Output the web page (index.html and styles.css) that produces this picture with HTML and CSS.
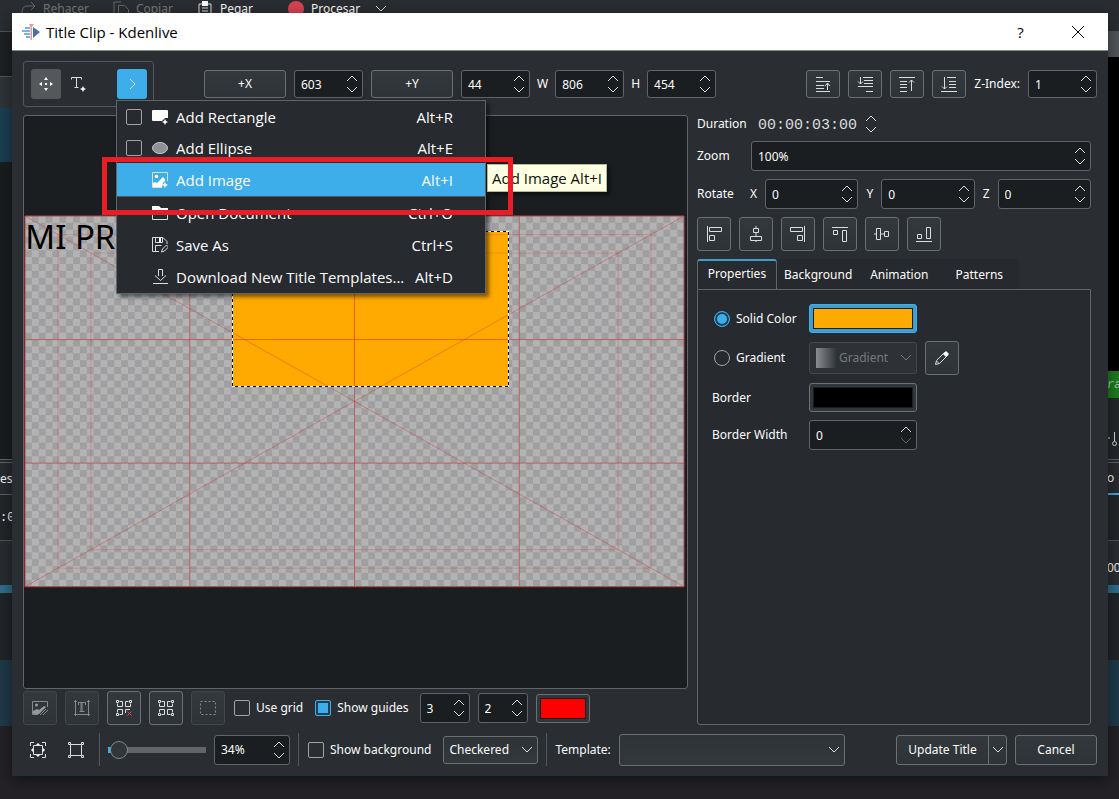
FILE: index.html
```html
<!DOCTYPE html>
<html lang="en">
  <head>
    <meta charset="utf-8" />
    <title>Title Clip - Kdenlive</title>
    <link rel="stylesheet" href="styles.css" />
  </head>
  <body>
    <!-- icon set -->
    <svg class="sprite" aria-hidden="true">
      <symbol id="chevron" viewBox="0 0 12 8"><path d="M1 1l5 5 5-5" /></symbol>
      <symbol id="spin" viewBox="0 0 12 18">
        <path d="M1 6l5-5 5 5" />
        <path class="down" d="M1 12l5 5 5-5" />
      </symbol>
      <symbol id="move" viewBox="0 0 16 16">
        <path class="fill" d="M8 1l2 3H6zM8 15l2-3H6zM1 8l3-2v4zM15 8l-3-2v4zM7 7h2v2H7z" />
      </symbol>
      <symbol id="text-add" viewBox="0 0 16 16">
        <path d="M1.500 3.500v-2h10v2M6.500 1.500v10M4.500 11.500h4" />
        <path class="fill" d="M13 10l1 2 2 1-2 1-1 2-1-2-2-1 2-1z" />
      </symbol>
      <symbol id="raise" viewBox="0 0 16 16">
        <path d="M1 1.500h7M1 5.500h14M1 9.500h8M1 12.500h8M1 15.500h14M12.500 14V7M10 10l2.500-3 2.500 3" />
      </symbol>
      <symbol id="lower" viewBox="0 0 16 16">
        <path d="M6 1.500h10M7 4.500h9M7 7.500h9M1 10.500h15M9 15.500h7M3.500 1v7M1 5.500L3.500 8 6 5.500" />
      </symbol>
      <symbol id="to-top" viewBox="0 0 16 16">
        <path d="M0 1.500h16M1 5.500h7M1 8.500h7M1 11.500h7M1 15.500h7M12.500 15V4M10 6.500L12.500 4 15 6.500" />
      </symbol>
      <symbol id="to-bottom" viewBox="0 0 16 16">
        <path d="M6 1.500h9M8 5.500h7M8 8.500h7M8 11.500h7M0 15.500h16M3.500 1v12M1 10.500L3.500 13 6 10.500" />
      </symbol>
      <symbol id="al-left" viewBox="0 0 16 16"><path d="M1.500 0v16M3.500 1.500h12v4h-12zM3.500 9.500h5v5h-5z" /></symbol>
      <symbol id="al-hcenter" viewBox="0 0 16 16"><path d="M5.500 2.500h5v4h-5zM2.500 10.500h11v4h-11zM8 0v2M8 7v3M8 15v1" /></symbol>
      <symbol id="al-right" viewBox="0 0 16 16"><path d="M14.500 0v16M.5 1.500h12v4H.5zM7.500 9.500h5v5h-5z" /></symbol>
      <symbol id="al-top" viewBox="0 0 16 16"><path d="M0 1.500h16M1.500 4.500h4v4h-4zM10.500 4.500h4v11h-4z" /></symbol>
      <symbol id="al-vcenter" viewBox="0 0 16 16"><path d="M2.500 2.500h4v11h-4zM10.500 5.500h4v5h-4zM0 8h2M7 8h3" /></symbol>
      <symbol id="al-bottom" viewBox="0 0 16 16"><path d="M0 15.500h16M1.500 8.500h4v4h-4zM10.500 1.500h4v11h-4z" /></symbol>
      <symbol id="pencil" viewBox="0 0 16 16">
        <path d="M1.500 14.500l1-4 8-8 3 3-8 8zM2.500 11l2.500 2.500" />
        <path class="fill" d="M9 4l3-3 3 3-3 3z" />
      </symbol>
      <symbol id="rect-add" viewBox="0 0 16 16">
        <path class="fill" d="M1 1h14q1 0 1 1v7h-3l-3 3H1q-1 0-1-1V2q0-1 1-1zM13 10l1 2 2 1-2 1-1 2-1-2-2-1 2-1z" />
      </symbol>
      <symbol id="ellipse" viewBox="0 0 16 16"><ellipse class="grey" cx="8" cy="8" rx="7.500" ry="5.500" /></symbol>
      <symbol id="image-add" viewBox="0 0 16 16">
        <path d="M15.500 9V.5H.5v15H10" />
        <circle class="fill" cx="4.500" cy="4.500" r="1.800" />
        <path class="fill" d="M1 15v-4l2-1 2 1 6-6 2 2v2l-2 2-1 4zM13 10l1 2 2 1-2 1-1 2-1-2-2-1 2-1z" />
      </symbol>
      <symbol id="folder" viewBox="0 0 16 16">
        <path d="M.5 1.500v13h15v-11h-7l-2-2z" />
        <path class="fill" d="M0 1h7l2 2h7v3H8L6 8H0z" />
      </symbol>
      <symbol id="save" viewBox="0 0 16 16">
        <path d="M7 14.500H.5V.5H11l4 4V7M3.500.5v5h7v-5M3.500 14V8.500h6M9.500 15l1-3 4-4 2 2-4 4z" />
        <path class="fill" d="M7 1h2v4H7z" />
      </symbol>
      <symbol id="download" viewBox="0 0 16 16"><path d="M6.500 7V.5h4V7M3 6.500l5.500 5 5.500-5M1 14.500h15" /></symbol>
      <symbol id="image-edit" viewBox="0 0 16 16">
        <path d="M15.500 7V1.500H.5v13H6" />
        <circle class="fill" cx="4.500" cy="5" r="1.500" />
        <path class="fill" d="M1 14v-3l4-2 2 1 5-4 2 1-7 7z" />
        <path d="M8 15l6-6M11 15l5-5" />
      </symbol>
      <symbol id="text-frame" viewBox="0 0 16 16"><path d="M1.500 0v16M14.500 0v16M0 14.500h16M0 1.500h3M13 1.500h3M4.500 5V2.500h7V5M8 2.500v9M7 2.500v9M5.500 11.500h5" /></symbol>
      <symbol id="nodes" viewBox="0 0 16 16">
        <path d="M3.500 1.500h3v5h-5v-3M12.500 1.500h-3v5h5v-3M3.500 14.500h3v-5h-5v3M12.500 14.500h-3v-5h5v3" />
        <path d="M.5.500h2v2h-2zM13.500.5h2v2h-2zM.5 13.500h2v2h-2zM13.500 13.500h2v2h-2z" />
      </symbol>
      <symbol id="nodes-off" viewBox="0 0 16 16">
        <path d="M3.500 1.500h3v5h-5v-3M12.500 1.500h-3v5h5v-3M3.500 14.500h3v-5h-5v3M9.500 13V9.500H14" />
        <path d="M.5.500h2v2h-2zM13.500.5h2v2h-2zM.5 13.500h2v2h-2z" />
        <path class="cross" d="M11.500 11.500l4 4M15.500 11.500l-4 4" />
      </symbol>
      <symbol id="dashed" viewBox="0 0 16 16"><path stroke-dasharray="2 2" d="M.5 1.500h15v13H.5z" /></symbol>
      <symbol id="fit" viewBox="0 0 16 16">
        <path d="M3.500 3.500h9v9h-9zM.5 4V.5H4M12 .5h3.500V4M15.500 12v3.500H12M4 15.500H.5V12" />
        <path class="fill" d="M6 3l2-2 2 2zM6 13l2 2 2-2zM3 6L1 8l2 2zM13 6l2 2-2 2z" />
      </symbol>
      <symbol id="unfit" viewBox="0 0 16 16">
        <path d="M2.500 2.500h11v11h-11z" />
        <path d="M.5.500h2v2h-2zM13.500.5h2v2h-2zM.5 13.500h2v2h-2zM13.500 13.500h2v2h-2z" />
      </symbol>
    </svg>

    <!-- main window behind the dialog -->
    <div class="desk" aria-hidden="true">
      <div class="desk-bar">
        <span class="off"><svg viewBox="0 0 16 16"><path d="M15 5H7Q2 5 2 12M11 1l4 4-4 4" /></svg>Rehacer</span>
        <span class="off"><svg viewBox="0 0 16 16"><path d="M4 13H1V1h7M5.500 4.500h6l4 4v7h-10z" /></svg>Copiar</span>
        <span><svg viewBox="0 0 16 16"><path d="M2 3h12v13H2zM5 7h6M5 10h6" /><path class="fill" d="M5 0h6v5H5z" /></svg>Pegar</span>
        <span><i class="rec"></i>Procesar<svg class="chev"><use href="#chevron" /></svg></span>
      </div>
      <div class="edge edge-left">
        <b class="s-head"></b><b class="s-tool"></b><b class="s-blue"></b><b class="s-dark"></b>
        <b class="s-tab">es</b><b class="s-time">:0</b><b class="s-gap"></b><b class="s-line"></b>
        <b class="s-track"></b><b class="s-teal"></b><b class="s-end"></b>
      </div>
      <div class="edge edge-right">
        <b class="r-grey"></b><b class="r-black"></b><b class="r-green">ra</b>
        <b class="r-low"><svg viewBox="0 0 12 16"><path d="M0 7h3M7.500 1v9" /><circle cx="7.500" cy="12.500" r="2" /></svg></b>
        <b class="s-tab sel">o</b><b class="s-time"></b><b class="s-gap">00</b><b class="s-line"></b>
        <b class="s-track"></b><b class="s-teal"></b><b class="s-end"></b>
      </div>
    </div>

    <main class="dialog">
      <header class="titlebar">
        <svg class="logo" viewBox="0 0 18 16">
          <path fill="#7eb0e8" d="M3 3h5v2H3zM0 6h8v2H0zM2 9h6v2H2zM4 12h4v2H4z" />
          <path fill="#4a6fa5" d="M11 3l7 5-7 6z" />
          <path fill="#e89a9a" d="M7 0h5l-2 3v13H8.500V3z" />
        </svg>
        <h1>Title Clip - Kdenlive</h1>
        <button class="win" aria-label="Help">?</button>
        <button class="win" aria-label="Close"><svg viewBox="0 0 12 12"><path d="M0 0l12 12M12 0L0 12" /></svg></button>
      </header>

      <div class="content">
        <div class="toolbar">
          <div class="tools">
            <button class="tool on" aria-label="Selection Tool"><svg><use href="#move" /></svg></button>
            <button class="tool" aria-label="Add Text"><svg><use href="#text-add" /></svg></button>
            <button class="tool more" aria-label="More tools"><svg viewBox="0 0 16 16"><path d="M6 3l5 5-5 5" /></svg></button>

            <div class="menu" role="menu">
              <label class="item"><input type="checkbox" /><svg><use href="#rect-add" /></svg>Add Rectangle<kbd>Alt+R</kbd></label>
              <label class="item"><input type="checkbox" /><svg><use href="#ellipse" /></svg>Add Ellipse<kbd>Alt+E</kbd></label>
              <button class="item current"><svg><use href="#image-add" /></svg>Add Image<kbd>Alt+I</kbd></button>
              <hr />
              <button class="item"><svg><use href="#folder" /></svg>Open Document<kbd>Ctrl+O</kbd></button>
              <button class="item"><svg><use href="#save" /></svg>Save As<kbd>Ctrl+S</kbd></button>
              <button class="item"><svg><use href="#download" /></svg>Download New Title Templates...<kbd>Alt+D</kbd></button>
              <div class="tooltip" role="tooltip">Add Image Alt+I</div>
              <div class="marker"></div>
            </div>
          </div>
          <div class="geometry">
            <button class="btn axis">+X</button>
            <span class="spin"><input aria-label="X position" value="603" /><svg><use href="#spin" /></svg></span>
            <button class="btn axis">+Y</button>
            <span class="spin"><input aria-label="Y position" value="44" /><svg><use href="#spin" /></svg></span>
            <label for="w">W</label>
            <span class="spin"><input id="w" value="806" /><svg><use href="#spin" /></svg></span>
            <label for="h">H</label>
            <span class="spin"><input id="h" value="454" /><svg><use href="#spin" /></svg></span>
          </div>
          <div class="order">
            <button class="btn" aria-label="Raise"><svg><use href="#raise" /></svg></button>
            <button class="btn" aria-label="Lower"><svg><use href="#lower" /></svg></button>
            <button class="btn" aria-label="Raise to top"><svg><use href="#to-top" /></svg></button>
            <button class="btn" aria-label="Lower to bottom"><svg><use href="#to-bottom" /></svg></button>
            <label for="z-index">Z-Index:</label>
            <span class="spin"><input id="z-index" value="1" /><svg><use href="#spin" /></svg></span>
          </div>
        </div>

        <div class="work">
          <section class="stage">
            <div class="view">
              <svg class="scene" viewBox="0 0 1920 1080">
                <defs>
                  <pattern id="checks" width="40" height="40" patternUnits="userSpaceOnUse">
                    <path fill="#b3b3b3" d="M0 0h40v40H0z" />
                    <path fill="#9f9fa1" d="M20 0h20v20H20zM0 20h20v20H0z" />
                  </pattern>
                </defs>
                <rect width="1920" height="1080" fill="url(#checks)" />
                <text x="1" y="96">MI PR</text>
                <rect class="shape" x="606" y="46" width="804" height="452" />
                <g class="safe">
                  <rect x="96" y="54" width="1728" height="972" />
                  <rect x="192" y="108" width="1536" height="864" />
                </g>
                <path class="diag" d="M0 0l1920 1080M0 1080L1920 0" />
                <path class="guide" d="M480 0v1080" />
                <path class="guide" d="M960 0v1080" />
                <path class="guide" d="M1440 0v1080" />
                <path class="guide" d="M0 360h1920" />
                <path class="guide" d="M0 720h1920" />
                <rect class="frame" width="1920" height="1080" />
                <rect class="sel-base" x="606" y="46" width="804" height="452" />
                <rect class="sel-dash" x="606" y="46" width="804" height="452" />
              </svg>
            </div>
            <div class="options">
              <button class="btn sq" disabled aria-label="Edit image"><svg><use href="#image-edit" /></svg></button>
              <button class="btn sq" disabled aria-label="Text frame"><svg><use href="#text-frame" /></svg></button>
              <button class="btn sq" aria-label="Unselect all"><svg><use href="#nodes-off" /></svg></button>
              <button class="btn sq" aria-label="Select all"><svg><use href="#nodes" /></svg></button>
              <button class="btn sq" disabled aria-label="Keep selected"><svg><use href="#dashed" /></svg></button>
              <label class="check"><input type="checkbox" />Use grid</label>
              <label class="check"><input type="checkbox" checked />Show guides</label>
              <span class="spin small"><input aria-label="Vertical guides" value="3" /><svg><use href="#spin" /></svg></span>
              <span class="spin small"><input aria-label="Horizontal guides" value="2" /><svg><use href="#spin" /></svg></span>
              <button class="color guides-color" aria-label="Guides color"><span class="red"></span></button>
            </div>
          </section>

          <aside class="side">
            <div class="row duration">
              <label for="duration">Duration</label>
              <input id="duration" value="00:00:03:00" />
              <svg class="arrows"><use href="#spin" /></svg>
            </div>
            <div class="row">
              <label for="zoom">Zoom</label>
              <span class="spin"><input id="zoom" value="100%" /><svg><use href="#spin" /></svg></span>
            </div>
            <div class="row">
              <span class="name">Rotate</span>
              <label class="ax" for="rx">X</label>
              <span class="spin"><input id="rx" value="0" /><svg><use href="#spin" /></svg></span>
              <label class="ax" for="ry">Y</label>
              <span class="spin"><input id="ry" value="0" /><svg><use href="#spin" /></svg></span>
              <label class="ax" for="rz">Z</label>
              <span class="spin"><input id="rz" value="0" /><svg><use href="#spin" /></svg></span>
            </div>
            <div class="row">
              <button class="btn sq" aria-label="Align left"><svg><use href="#al-left" /></svg></button>
              <button class="btn sq" aria-label="Center horizontally"><svg><use href="#al-hcenter" /></svg></button>
              <button class="btn sq" aria-label="Align right"><svg><use href="#al-right" /></svg></button>
              <button class="btn sq" aria-label="Align top"><svg><use href="#al-top" /></svg></button>
              <button class="btn sq" aria-label="Center vertically"><svg><use href="#al-vcenter" /></svg></button>
              <button class="btn sq" aria-label="Align bottom"><svg><use href="#al-bottom" /></svg></button>
            </div>
            <div class="tabbox">
              <div class="tabs" role="tablist">
                <button class="active" role="tab">Properties</button>
                <button role="tab">Background</button>
                <button role="tab">Animation</button>
                <button role="tab">Patterns</button>
              </div>
              <div class="panel">
                <label class="radio"><input type="radio" name="fill" checked />Solid Color</label>
                <button class="color focus" aria-label="Fill color"><span class="orange"></span></button>
                <label class="radio"><input type="radio" name="fill" />Gradient</label>
                <span class="combo gradient">
                  <select aria-label="Gradient" disabled><option>Gradient</option></select>
                  <svg><use href="#chevron" /></svg>
                </span>
                <button class="btn sq" aria-label="Edit gradient"><svg><use href="#pencil" /></svg></button>
                <label for="border">Border</label>
                <button class="color" id="border"><span class="black"></span></button>
                <label for="border-width">Border Width</label>
                <span class="spin at-min"><input id="border-width" value="0" /><svg><use href="#spin" /></svg></span>
              </div>
            </div>
          </aside>
        </div>

        <footer class="bottom">
          <button class="tool" aria-label="Fit zoom"><svg><use href="#fit" /></svg></button>
          <button class="tool" aria-label="Original size"><svg><use href="#unfit" /></svg></button>
          <i class="sep"></i>
          <input class="slider" type="range" aria-label="Zoom level" min="0" max="100" value="3" />
          <span class="spin zoom"><input aria-label="Zoom percent" value="34%" /><svg><use href="#spin" /></svg></span>
          <i class="sep"></i>
          <label class="check"><input type="checkbox" />Show background</label>
          <span class="combo">
            <select aria-label="Background"><option>Checkered</option></select>
            <svg><use href="#chevron" /></svg>
          </span>
          <i class="sep"></i>
          <label for="template">Template:</label>
          <span class="combo template">
            <select id="template"><option></option></select>
            <svg><use href="#chevron" /></svg>
          </span>
          <div class="actions">
            <button class="btn update">Update Title</button>
            <button class="btn drop" aria-label="More actions"><svg><use href="#chevron" /></svg></button>
            <button class="btn cancel">Cancel</button>
          </div>
        </footer>
      </div>
    </main>
  </body>
</html>
```

FILE: styles.css
```css
* {
  box-sizing: border-box;
}

body {
  margin: 0;
  min-height: 100vh;
  padding: 13px 11px 23px 12px;
  display: flex;
  background-color: #252227;
  color: #fcfcfc;
  font-family: "Noto Sans", sans-serif;
  font-size: 12px;
  line-height: 16px;
  overflow: hidden;
}

button,
input,
select {
  font: inherit;
  color: inherit;
  margin: 0;
}

svg {
  display: block;
  width: 16px;
  height: 16px;
  flex: none;
  fill: none;
  stroke: #dcdddd;
}

.sprite {
  position: absolute;
  width: 0;
  height: 0;
}

.fill {
  fill: #fcfcfc;
  stroke: none;
}

.grey {
  fill: #8f9294;
  stroke: #c6c8c9;
}

.cross {
  stroke: #da4453;
}

.down {
  stroke: var(--down);
}

/* main window behind */
.desk {
  position: absolute;
  inset: 0;
  z-index: -1;
  overflow: hidden;
}

.desk-bar {
  display: flex;
  gap: 24px;
  height: 31px;
  padding-left: 20px;
  background-color: #2a2e32;
}

.desk-bar span {
  display: flex;
  gap: 7px;
  height: 18px;
  align-items: center;
}

.desk-bar .off {
  opacity: 0.35;
}

.desk-bar .rec {
  width: 16px;
  height: 16px;
  margin-left: 11px;
  border-radius: 50%;
  background-color: #da4453;
}

.desk-bar .chev {
  width: 12px;
  height: 8px;
  margin-left: 8px;
}

.edge {
  position: absolute;
  top: 31px;
  bottom: 0;
  width: 12px;
  display: flex;
  flex-direction: column;
}

.edge-left {
  left: 0;
}

.edge-right {
  right: 0;
}

.edge b {
  display: flex;
  align-items: center;
  font-weight: normal;
  overflow: hidden;
}

.s-head {
  height: 46px;
  background-color: #1e2123;
  border-top: 1px solid #54585b;
  border-bottom: 1px solid #54585b;
}

.s-tool {
  height: 31px;
  background-color: #31363b;
}

.s-blue {
  height: 54px;
  background-color: #1d4054;
}

.s-dark {
  height: 297px;
  background-color: #1b1e20;
}

.s-tab {
  height: 36px;
  background-color: #292c30;
  border-top: 4px double #616569;
  border-bottom: 1px solid #616569;
}

.s-tab.sel {
  border-bottom: 2px solid #3daee9;
}

.s-time {
  height: 46px;
  background-color: #24272a;
  border-bottom: 1px solid #54585b;
  font-family: "Liberation Mono", monospace;
}

.s-gap {
  height: 44px;
  padding-top: 10px;
  background-color: #2a2e32;
}

.s-line {
  height: 8px;
  background-color: #2f6f8f;
}

.s-track {
  height: 67px;
  background-color: #212529;
}

.s-teal {
  height: 66px;
  background-color: #213b4b;
}

.s-end {
  flex: 1;
  background-color: #252227;
}

.r-grey {
  height: 26px;
  background-color: #54585b;
}

.r-black {
  height: 314px;
  background-color: #000;
}

.r-green {
  height: 27px;
  background-color: #1e7e1e;
  color: #a5cfa5;
  font-family: "Liberation Mono", monospace;
  font-style: italic;
}

.r-low {
  height: 61px;
  padding-top: 20px;
  background-color: #25282b;
}

.r-low svg {
  width: 12px;
}

/* dialog */
.dialog {
  flex: 1;
  min-width: 0;
  display: flex;
  flex-direction: column;
  background-color: #2a2e32;
  box-shadow: 0 4px 16px rgba(0, 0, 0, 0.5);
}

.titlebar {
  display: flex;
  align-items: center;
  height: 38px;
  padding: 0 2px 0 10px;
  background-color: #fff;
  border-bottom: 1px solid #85888a;
  color: #000;
  font-family: "Open Sans", sans-serif;
}

.titlebar h1 {
  flex: 1;
  margin: 0 0 0 6px;
  font-size: 15px;
  font-weight: normal;
}

.titlebar .logo {
  width: 18px;
  stroke: none;
}

.win {
  display: grid;
  place-items: center;
  width: 57px;
  height: 36px;
  border: 0;
  background: none;
  font-size: 15px;
}

.win svg {
  width: 12px;
  height: 12px;
  stroke: #000;
  overflow: visible;
}

.content {
  flex: 1;
  display: flex;
  flex-direction: column;
  gap: 8px;
  padding: 10px 11px;
}

/* shared controls */
.btn {
  display: grid;
  place-items: center;
  height: 28px;
  padding: 0;
  border: 1px solid #6c7073;
  border-radius: 3px;
  background: linear-gradient(#33383c, #2e3337);
}

.btn.sq {
  width: 34px;
  height: 34px;
}

.btn:disabled {
  border-color: #43474b;
}

.btn:disabled svg {
  opacity: 0.5;
}

.spin {
  display: flex;
  align-items: center;
  width: 69px;
  height: 28px;
  padding: 0 4px 0 6px;
  border: 1px solid #616569;
  border-radius: 3px;
  background-color: #1b1e20;
}

.spin input {
  flex: 1;
  min-width: 0;
  width: 0;
  padding: 1px 0 0;
  border: 0;
  outline: 0;
  background: none;
}

.spin svg,
.arrows {
  --down: #dcdddd;
  width: 12px;
  height: 18px;
}

.spin.at-min svg {
  --down: #616569;
}

.color {
  height: 29px;
  padding: 3px;
  border: 1px solid #6c7073;
  border-radius: 3px;
  background-color: #31363b;
}

.color span {
  display: block;
  height: 21px;
  border: 1px solid #1b1e20;
}

.color.focus {
  border-color: #3daee9;
  background-color: #439ccb;
}

.orange {
  background-color: #ffaa00;
}

.black {
  background-color: #000;
}

.red {
  background-color: #ff0000;
}

.combo {
  display: grid;
  align-items: center;
}

.combo select,
.combo svg {
  grid-area: 1 / 1;
}

.combo select {
  appearance: none;
  width: 100%;
  height: 28px;
  padding: 0 24px 0 5px;
  border: 1px solid #6c7073;
  border-radius: 3px;
  background: linear-gradient(#2e3337, #33383c);
  opacity: 1;
}

.combo svg {
  width: 12px;
  height: 8px;
  margin-right: 5px;
  justify-self: end;
  pointer-events: none;
}

input[type="checkbox"],
input[type="radio"] {
  appearance: none;
  flex: none;
  width: 16px;
  height: 16px;
  border: 1px solid #a1a5a8;
  border-radius: 2px;
}

input[type="radio"] {
  border-radius: 50%;
}

input:checked {
  border-color: #3daee9;
  background-color: #3daee9;
  box-shadow: inset 0 0 0 2px #1e3f53;
}

.check,
.radio {
  display: flex;
  align-items: center;
  gap: 6px;
}

/* toolbar */
.toolbar,
.geometry,
.order {
  display: flex;
  align-items: center;
  gap: 8px;
}

.geometry {
  flex: 1;
  margin-left: 42px;
}

.geometry label {
  margin: 0 -1px;
}

.order .btn {
  width: 34px;
}

.axis {
  width: 82px;
}

.tools {
  position: relative;
  display: flex;
  gap: 2px;
  width: 131px;
  height: 46px;
  padding: 7px 6px 7px 7px;
  border: 1px solid #54585b;
  border-radius: 3px;
}

.tool {
  display: grid;
  place-items: center;
  width: 30px;
  height: 30px;
  padding: 0;
  border: 0;
  border-radius: 3px;
  background: none;
}

.tool.on {
  background-color: #54585b;
}

.tool.more {
  margin-left: auto;
  background-color: #3daee9;
}

/* dropdown menu over the view */
.menu {
  position: absolute;
  z-index: 2;
  top: 38px;
  left: 92px;
  width: 370px;
  border: 1px solid #616569;
  background-color: #272a2e;
  box-shadow: 3px 3px 4px rgba(0, 0, 0, 0.5);
  font-family: "Open Sans", sans-serif;
  font-size: 15px;
}

.menu hr {
  margin: 0;
  border: 0;
  border-top: 1px solid #54585b;
}

.item {
  display: flex;
  align-items: center;
  gap: 8px;
  width: 100%;
  height: 32px;
  padding: 0 32px 0 35px;
  border: 0;
  background: none;
  text-align: left;
  white-space: nowrap;
}

label.item {
  height: 31px;
  padding-left: 9px;
}

.item input {
  margin-right: 2px;
}

.item kbd {
  margin-left: auto;
  font-family: inherit;
}

.item.current {
  height: 33px;
  background-color: #3daee9;
}

.tooltip {
  position: absolute;
  top: 63px;
  left: 370px;
  padding: 5px 4px;
  border: 1px solid #b9b99a;
  background-color: #ffffe1;
  box-shadow: 3px 3px 4px rgba(0, 0, 0, 0.5);
  color: #111;
  white-space: nowrap;
}

.marker {
  position: absolute;
  top: 56px;
  left: -15px;
  width: 411px;
  height: 58px;
  border: 5px solid #ec1c24;
  pointer-events: none;
}

/* work area */
.work {
  flex: 1;
  display: flex;
  gap: 9px;
  padding-right: 6px;
}

.stage {
  flex: 1;
  min-width: 0;
  display: flex;
  flex-direction: column;
  gap: 2px;
}

.view {
  flex: 1;
  padding: 100px 3px 0 1px;
  border: 1px solid #616569;
  border-radius: 3px;
  background-color: #1b1e20;
}

.scene {
  width: 100%;
  height: auto;
  overflow: visible;
  stroke: none;
}

.scene text {
  fill: #000;
  font-size: 96px;
}

.shape {
  fill: #ffaa00;
}

.safe,
.guide,
.diag,
.frame,
.sel-base,
.sel-dash {
  fill: none;
  stroke-width: 1px;
}

.safe rect,
.guide,
.diag,
.frame,
.sel-base,
.sel-dash {
  vector-effect: non-scaling-stroke;
}

.safe {
  stroke: rgba(230, 30, 30, 0.22);
}

.diag {
  stroke: rgba(220, 30, 30, 0.35);
}

.guide {
  stroke: rgba(220, 20, 20, 0.5);
}

.frame {
  stroke: #b8474a;
}

.sel-base {
  stroke: #fff;
  shape-rendering: crispEdges;
}

.sel-dash {
  stroke: #000;
  stroke-dasharray: 3 3;
  shape-rendering: crispEdges;
}

.options {
  display: flex;
  align-items: center;
  gap: 8px;
}

.options .check {
  margin: 0 3px 0 1px;
}

.options .spin {
  width: 50px;
  height: 30px;
}

.guides-color {
  width: 54px;
}

/* side column */
.side {
  width: 394px;
  display: flex;
  flex-direction: column;
  gap: 8px;
}

.row {
  display: flex;
  align-items: center;
  gap: 8px;
}

.row > label,
.row .name {
  width: 46px;
}

.row .name {
  width: 45px;
}

.row .ax {
  width: auto;
}

.row .spin {
  flex: 1;
  height: 30px;
}

.duration {
  height: 18px;
}

.duration input {
  width: 106px;
  padding: 3px 0 0 7px;
  border: 0;
  background: none;
  color: #dcdddd;
  font-family: "Liberation Mono", monospace;
  font-size: 15px;
}

.tabbox {
  flex: 1;
  display: flex;
  flex-direction: column;
}

.tabs {
  display: flex;
}

.tabs button {
  min-width: 80px;
  height: 30px;
  padding: 1px 7px 0;
  border: 0;
  background-color: #26292d;
}

.tabs .active {
  margin-bottom: -1px;
  padding: 0 7px 2px;
  border: 1px solid #616569;
  border-top: 2px solid #439ccb;
  border-bottom: 0;
  border-radius: 3px 3px 0 0;
  background-color: #272a2e;
  z-index: 1;
}

.panel {
  flex: 1;
  display: grid;
  grid-template-columns: 89px 108px 34px;
  gap: 8px;
  align-content: start;
  align-items: center;
  padding: 14px;
  border: 1px solid #616569;
  border-radius: 0 0 3px 3px;
  background-color: #272a2e;
}

.panel > label {
  grid-column: 1;
  white-space: nowrap;
}

.panel .radio {
  padding-left: 2px;
}

.panel .spin {
  width: auto;
  height: 30px;
}

.gradient select {
  height: 32px;
  padding-left: 29px;
  border-color: #43474b;
  background: linear-gradient(90deg, #8a8d8f, #31363b) 6px 50% / 20px 20px no-repeat, #2e3236;
  color: #75797c;
}

.gradient svg {
  stroke: #75797c;
}

/* bottom row */
.bottom {
  display: flex;
  align-items: center;
  gap: 8px;
  height: 33px;
}

.bottom .check {
  margin: 0 4px 0 1px;
}

.sep {
  width: 1px;
  height: 33px;
  background-color: #54585b;
}

.slider {
  appearance: none;
  width: 98px;
  height: 18px;
  background: linear-gradient(90deg, #3daee9 6px, #616569 6px) 0 50% / 100% 6px no-repeat;
  border-radius: 3px;
}

.slider::-webkit-slider-thumb {
  appearance: none;
  width: 18px;
  height: 18px;
  border: 1px solid #85888a;
  border-radius: 50%;
  background-color: #31363b;
}

.zoom {
  width: 76px;
  height: 30px;
}

.bottom .combo {
  width: 95px;
}

.bottom .template {
  width: 226px;
}

.template select {
  height: 32px;
}

.actions {
  flex: 1;
  display: flex;
  justify-content: flex-end;
}

.actions .btn {
  height: 30px;
}

.update {
  width: 93px;
  border-radius: 3px 0 0 3px;
}

.actions .drop {
  width: 19px;
  margin: 0 8px 0 -1px;
  border-radius: 0 3px 3px 0;
}

.drop svg {
  width: 12px;
  height: 8px;
}

.actions .cancel {
  width: 82px;
}
```
